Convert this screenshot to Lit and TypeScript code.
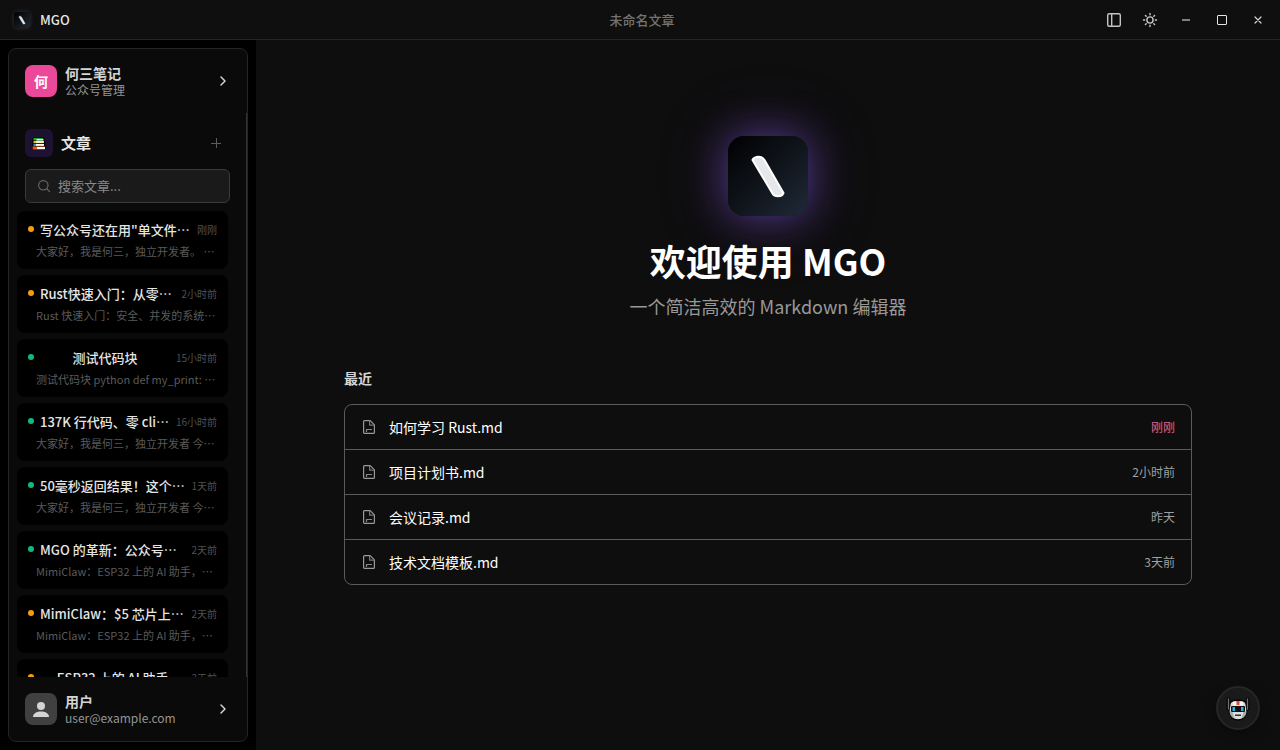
import { LitElement, html, css, svg } from "lit";
import { customElement } from "lit/decorators.js";
import { classMap } from "lit/directives/class-map.js";

interface Article {
  title: string;
  time: string;
  preview: string;
  published: boolean;
}

const ARTICLES: Article[] = [
  { title: '写公众号还在用"单文件编辑器"？', time: "刚刚", preview: "大家好，我是何三，独立开发者。 今天聊聊写作", published: false },
  { title: "Rust快速入门：从零开始学习", time: "2小时前", preview: "Rust 快速入门：安全、并发的系统编程语言", published: false },
  { title: "测试代码块", time: "15小时前", preview: "测试代码块 python def my_print: print(1)", published: true },
  { title: "137K 行代码、零 click 的项目", time: "16小时前", preview: "大家好，我是何三，独立开发者 今天介绍", published: true },
  { title: "50毫秒返回结果！这个工具太快", time: "1天前", preview: "大家好，我是何三，独立开发者 今天介绍", published: true },
  { title: "MGO 的革新：公众号写作工具", time: "2天前", preview: "MimiClaw：ESP32 上的 AI 助手，低成本方案", published: true },
  { title: "MimiClaw：$5 芯片上的助手", time: "2天前", preview: "MimiClaw：ESP32 上的 AI 助手，低成本方案", published: false },
  { title: "ESP32 上的 AI 助手", time: "2天前", preview: "MimiClaw：ESP32 上的 AI 助手，低成本方案", published: false },
];

const RECENT = [
  { name: "如何学习 Rust.md", time: "刚刚", fresh: true },
  { name: "项目计划书.md", time: "2小时前", fresh: false },
  { name: "会议记录.md", time: "昨天", fresh: false },
  { name: "技术文档模板.md", time: "3天前", fresh: false },
];

const slash = svg`<path d="M24.500 24 C26 20.500 33.500 19 36.500 24 L55.500 57 C53.500 61.500 46.500 61 44.500 57.500 Z"
  fill="#e5e7eb" stroke="#fff" stroke-width="2" stroke-linejoin="round"/>`;

const chevron = html`<svg width="16" height="16" viewBox="0 0 16 16" fill="none" stroke="#d4d4d4" stroke-width="1.500"
  stroke-linecap="round" stroke-linejoin="round" aria-hidden="true"><path d="M6 4l4 4-4 4"/></svg>`;

const fileIcon = html`<svg width="16" height="16" viewBox="0 0 16 16" fill="none" stroke="#999" stroke-width="1.200"
  stroke-linejoin="round" aria-hidden="true">
  <path d="M3.600 1.600h5.600l4.200 4.200v7.600a1 1 0 0 1-1 1H3.600a1 1 0 0 1-1-1V2.600a1 1 0 0 1 1-1z"/>
  <path d="M8.600 1.800v4.400h4.600" stroke="#777"/>
  <path d="M5.500 13v-2.500H11" stroke="#888"/></svg>`;

@customElement("app-root")
export class AppRoot extends LitElement {
  static styles = css`
    :host {
      display: flex;
      flex-direction: column;
      height: 100vh;
      overflow: hidden;
      background: #0e0e0e;
      color: #e5e5e5;
      font-family: "Noto Sans CJK SC", sans-serif;
      font-size: 14px;
    }
    * { box-sizing: border-box; }
    button, input { font: inherit; color: inherit; }
    button { background: none; border: 0; padding: 0; cursor: pointer; }
    svg { display: block; flex: none; }
    h1, h2, p, ul { margin: 0; padding: 0; }
    ul { list-style: none; }

    .titlebar {
      display: grid;
      grid-template-columns: 1fr auto 1fr;
      align-items: center;
      height: 40px;
      flex: none;
      padding: 0 8px 0 12px;
      border-bottom: 1px solid #252525;
      background: #0f0f0f;
    }
    .brand { display: flex; align-items: center; gap: 8px; font-size: 13px; font-weight: 500; }
    .brand-mark { padding: 2px; }
    .brand-mark svg {
      border-radius: 3px;
      background: linear-gradient(135deg, #000, #1f2937);
      box-shadow: 0 0 4px #333;
    }
    .doc-title { color: #737373; font-size: 13px; font-weight: 500; }
    .controls { display: flex; justify-content: flex-end; gap: 8px; }
    .controls button { display: grid; place-items: center; width: 28px; height: 28px; }

    .body { display: flex; flex: 1; min-height: 0; }
    .sidebar { display: flex; flex: none; width: 256px; padding: 8px; background: #000; }
    .panel {
      display: flex;
      flex-direction: column;
      flex: 1;
      min-width: 0;
      overflow: hidden;
      border: 1px solid #252525;
      border-radius: 8px;
      background: #0a0a0a;
    }
    .account {
      display: flex;
      align-items: center;
      gap: 8px;
      flex: none;
      padding: 16px;
      text-align: left;
    }
    .avatar {
      display: grid;
      place-items: center;
      width: 32px;
      height: 32px;
      border-radius: 8px;
      background: #404040;
      color: #fff;
      font-weight: 700;
    }
    .avatar.pink { background: #ec4899; }
    .who { display: flex; flex-direction: column; flex: 1; min-width: 0; }
    .who-name { color: #d4d4d4; font-weight: 700; line-height: 17px; }
    .who-sub { color: #949494; font-size: 12px; line-height: 15px; }

    .articles { flex: 1; min-height: 0; overflow: hidden; border-right: 1px solid #333; }
    .articles-head { display: flex; align-items: center; gap: 8px; padding: 16px 16px 12px; }
    .badge { display: grid; place-items: center; width: 28px; height: 28px; border-radius: 6px; background: #1e1233; }
    .articles-head h2 { flex: 1; font-size: 15px; font-weight: 700; line-height: 24px; }
    .add { display: grid; place-items: center; width: 28px; height: 28px; }
    .search {
      display: flex;
      align-items: center;
      gap: 7px;
      height: 34px;
      margin: 0 16px 8px;
      padding: 0 11px;
      border: 1px solid #3a3a3a;
      border-radius: 6px;
      background: #1a1a1a;
    }
    .search input {
      flex: 1;
      min-width: 0;
      padding: 0;
      border: 0;
      outline: 0;
      background: none;
      font-size: 13px;
      line-height: 20px;
    }
    .search input::placeholder { color: #888; opacity: 1; }
    .list { display: flex; flex-direction: column; gap: 6px; padding: 0 18px 0 8px; }
    .item {
      display: flex;
      flex-direction: column;
      gap: 3px;
      width: 100%;
      padding: 9px 11px 10px;
      border-radius: 8px;
      background: #000;
    }
    .item-top { display: flex; align-items: center; gap: 6px; width: 100%; }
    .dot { flex: none; width: 6px; height: 6px; margin-bottom: 2px; border-radius: 50%; background: #f59e0b; }
    .dot.published { background: #10b981; }
    .item-title, .item-preview { overflow: hidden; white-space: nowrap; text-overflow: ellipsis; }
    .item-title { flex: 1; min-width: 0; font-size: 13px; font-weight: 500; line-height: 20px; text-align: center; }
    .item-time { color: #505050; font-size: 10px; line-height: 16px; }
    .item-preview { display: block; width: 100%; padding-left: 8px; color: #5a5a5a; font-size: 11px; line-height: 16px; text-align: left; }

    .main { flex: 1; min-width: 0; overflow: auto; padding: 96px 64px 48px; }
    .welcome { display: flex; flex-direction: column; max-width: 848px; margin: 0 auto; }
    .hero { display: flex; flex-direction: column; align-items: center; }
    .logo {
      border-radius: 16px;
      background: linear-gradient(135deg, #000, #1f2937);
      box-shadow: 0 0 40px rgba(139, 92, 246, 0.5), 0 0 80px rgba(139, 92, 246, 0.2);
    }
    h1 { margin-top: 24px; color: #fff; font-size: 36px; font-weight: 700; line-height: 40px; }
    .tagline { margin-top: 12px; color: #999; font-size: 18px; line-height: 28px; }
    .recent-title { margin-top: 48px; color: #d4d4d4; font-size: 14px; font-weight: 700; line-height: 20px; }
    .recent { margin-top: 16px; border: 1px solid #5a5a5a; border-radius: 8px; }
    .recent li + li { border-top: 1px solid #5a5a5a; }
    .file { display: flex; align-items: center; gap: 12px; width: 100%; height: 44px; padding: 0 16px; }
    .file-name { flex: 1; color: #fff; text-align: left; }
    .file-time { color: #a0a0a0; font-size: 12px; line-height: 16px; }
    .file-time.fresh { color: #d6689f; }

    .assistant {
      position: absolute;
      right: 20px;
      bottom: 20px;
      display: grid;
      place-items: center;
      width: 44px;
      height: 44px;
      border: 2px solid #262626;
      border-radius: 50%;
      background: #1a1a1a;
      box-shadow: 0 4px 12px rgba(0, 0, 0, 0.3);
    }
  `;

  private renderTitlebar() {
    return html`<header class="titlebar">
      <div class="brand">
        <span class="brand-mark"><svg width="16" height="16" viewBox="0 0 80 80" aria-hidden="true">${slash}</svg></span>
        <span>MGO</span>
      </div>
      <div class="doc-title">未命名文章</div>
      <div class="controls">
        <button aria-label="侧边栏"><svg width="16" height="16" viewBox="0 0 16 16" fill="none" stroke="#c4c4c4" stroke-width="1.400">
          <rect x="1.700" y="1.700" width="12.600" height="12.600" rx="1.500"/><path d="M5.700 2v12"/></svg></button>
        <button aria-label="主题"><svg width="16" height="16" viewBox="0 0 16 16" fill="none" stroke="#c8c8c8" stroke-width="1.400" stroke-linecap="round">
          <circle cx="8" cy="8" r="3.100"/><path d="M8 1.500v1.200M8 13.300v1.200M1.500 8h1.200M13.300 8h1.200M3.400 3.400l.8.8M11.800 11.800l.8.8M3.400 12.600l.8-.8M11.800 4.200l.8-.8"/></svg></button>
        <button aria-label="最小化"><svg width="12" height="12" viewBox="0 0 12 12" stroke="#808080" stroke-width="2"><path d="M2 6h8"/></svg></button>
        <button aria-label="最大化"><svg width="12" height="12" viewBox="0 0 12 12" fill="none" stroke="#e5e5e5"><rect x="1.500" y="1.500" width="9" height="9" rx=".5"/></svg></button>
        <button aria-label="关闭"><svg width="12" height="12" viewBox="0 0 12 12" stroke="#d4d4d4" stroke-width="1.200" stroke-linecap="round"><path d="M3 3l6 6M9 3l-6 6"/></svg></button>
      </div>
    </header>`;
  }

  private renderSidebar() {
    return html`<aside class="sidebar"><div class="panel">
      <button class="account">
        <span class="avatar pink">何</span>
        <span class="who"><span class="who-name">何三笔记</span><span class="who-sub">公众号管理</span></span>
        ${chevron}
      </button>
      <section class="articles">
        <div class="articles-head">
          <span class="badge"><svg width="16" height="16" viewBox="0 0 16 16" aria-hidden="true">
            <path d="M1.500 2.500h12v4h1v8.500H1z" fill="#080808"/>
            <path d="M2.500 3h9.500v2.500H2.500z" fill="#20a526"/><path d="M5.500 4h7v1.500h-7z" fill="#eef4e6"/>
            <path d="M2.500 6h10v2h-10z" fill="#f2b90f"/><path d="M5 6.200h8v1.500H5z" fill="#fff"/>
            <path d="M2.500 8.700h10V11h-10z" fill="#249ce0"/><path d="M5 9h8v1.700H5z" fill="#fff"/>
            <path d="M1.700 11.500H14v3H1.700z" fill="#f15a16"/><path d="M6 12h8v2H6z" fill="#fff"/></svg></span>
          <h2>文章</h2>
          <button class="add" aria-label="新建文章"><svg width="12" height="12" viewBox="0 0 12 12" stroke="#5c5c5c"><path d="M6.500 1v10M1 6.500h10"/></svg></button>
        </div>
        <label class="search">
          <svg width="14" height="14" viewBox="0 0 14 14" fill="none" stroke="#666" stroke-width="1.200" stroke-linecap="round" aria-hidden="true">
            <circle cx="6.300" cy="6.300" r="4.700"/><path d="M10 10l2.600 2.600"/></svg>
          <input type="search" placeholder="搜索文章..." aria-label="搜索文章">
        </label>
        <ul class="list">
          ${ARTICLES.map((a) => html`<li><button class="item">
            <span class="item-top">
              <span class=${classMap({ dot: true, published: a.published })}></span>
              <span class="item-title">${a.title}</span>
              <span class="item-time">${a.time}</span>
            </span>
            <span class="item-preview">${a.preview}</span>
          </button></li>`)}
        </ul>
      </section>
      <button class="account">
        <span class="avatar"><svg width="20" height="20" viewBox="0 0 20 20" fill="#d4d4d4" aria-hidden="true">
          <circle cx="10" cy="7" r="4"/><path d="M2 18c0-7.300 16-7.300 16 0z"/></svg></span>
        <span class="who"><span class="who-name">用户</span><span class="who-sub">user@example.com</span></span>
        ${chevron}
      </button>
    </div></aside>`;
  }

  private renderMain() {
    return html`<main class="main"><div class="welcome">
      <div class="hero">
        <svg class="logo" width="80" height="80" viewBox="0 0 80 80" aria-hidden="true">${slash}</svg>
        <h1>欢迎使用 MGO</h1>
        <p class="tagline">一个简洁高效的 Markdown 编辑器</p>
      </div>
      <h2 class="recent-title">最近</h2>
      <ul class="recent">
        ${RECENT.map((f) => html`<li><button class="file">
          ${fileIcon}
          <span class="file-name">${f.name}</span>
          <span class=${classMap({ "file-time": true, fresh: f.fresh })}>${f.time}</span>
        </button></li>`)}
      </ul>
    </div></main>`;
  }

  render() {
    return html`${this.renderTitlebar()}
      <div class="body">${this.renderSidebar()}${this.renderMain()}</div>
      <button class="assistant" aria-label="AI 助手"><svg width="28" height="28" viewBox="0 0 28 28" aria-hidden="true">
        <path d="M4.500 5.500v9M23.500 5.500v9" stroke="#050505" stroke-width="4" stroke-linecap="round"/>
        <path d="M6 9.500c1-4.500 15-4.500 16 0l1 6.500c0 6-4 10-9 10s-9-4-9-10z" fill="#dcdcdc" stroke="#050505" stroke-width="1.500"/>
        <path d="M4.500 5v10M23.500 5v10" stroke="#707070" stroke-width="1.300" stroke-linecap="round"/>
        <path d="M5.500 17l3 1 2 6.500c-3-1-5-4-5-7.500zM22.500 17l-3 1-2 6.500c3-1 5-4 5-7.500z" fill="#aaa"/>
        <path d="M9 7.500h10v4H9z" fill="#f4f4f4"/><path d="M12.500 7h3v4h-3z" fill="#e8492f"/>
        <rect x="7" y="12" width="14" height="6" rx="1" fill="#101010"/>
        <path d="M8.500 13H11v4H8.500zM17 13h2.500v4H17z" fill="#24b4e8"/>
        <path d="M11 20.500h6V22h-6z" fill="#303030"/></svg></button>`;
  }
}
